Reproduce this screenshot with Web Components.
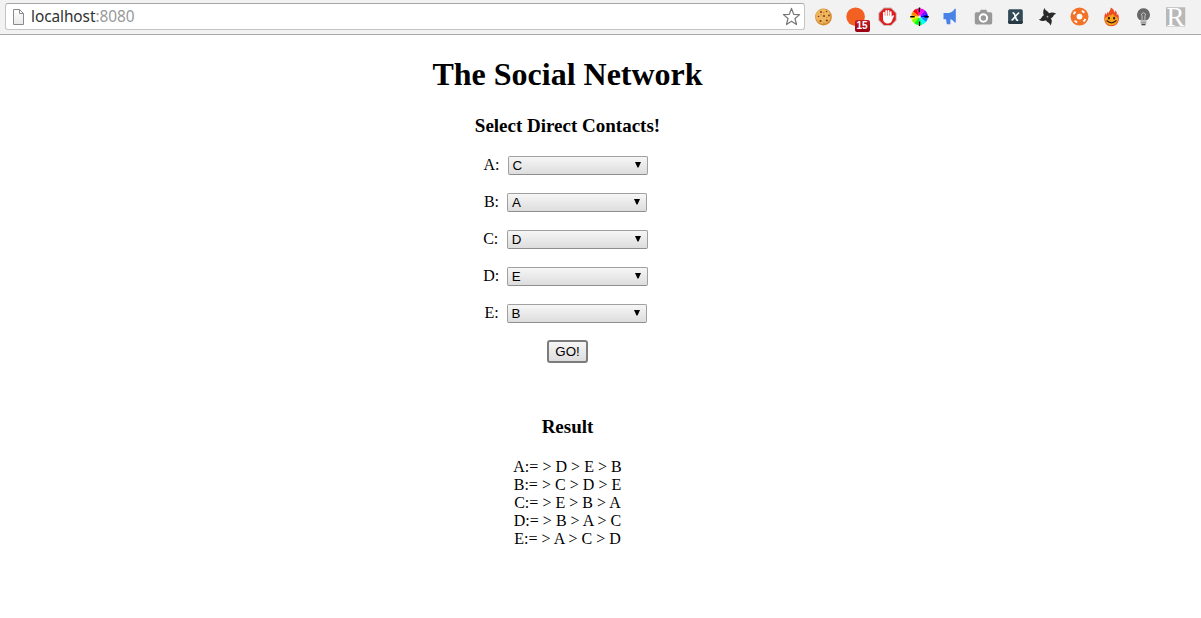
<!DOCTYPE html>
<html lang="en"><head><meta charset="utf-8"><title>The Social Network</title>
<style>html,body{margin:0;height:100%;background:#fff;overflow:hidden}body{font:16px/18px "Liberation Serif",serif;color:#000}</style></head>
<body>
<browser-bar></browser-bar>
<social-page>
<contact-row label="A:" value="C"></contact-row><contact-row label="B:" value="A"></contact-row><contact-row label="C:" value="D" wide style="--gap:8.6px"></contact-row><contact-row label="D:" value="E" wide></contact-row><contact-row label="E:" value="B"></contact-row>
<go-button slot="action">GO!</go-button>
<result-line slot="results">A:= &gt; D &gt; E &gt; B</result-line><result-line slot="results">B:= &gt; C &gt; D &gt; E</result-line><result-line slot="results">C:= &gt; E &gt; B &gt; A</result-line><result-line slot="results">D:= &gt; B &gt; A &gt; C</result-line><result-line slot="results">E:= &gt; A &gt; C &gt; D</result-line>
</social-page>
<script>
const define = (name, html) => customElements.define(name, class extends HTMLElement {
  constructor() { super(); this.attachShadow({mode: 'open'}).innerHTML = typeof html === 'function' ? html(this) : html; }
});

const wheel = ['#f00','#f08','#f0f','#80f','#00f','#08f','#0ff','#0f8','#0f0','#8f0','#ff0','#f80'].map((c, i) => {
  const p = a => `${9.5 + 8.4 * Math.sin(a)} ${9.7 - 8.4 * Math.cos(a)}`;
  const a = (i - 1.7) * Math.PI / 6;
  return `<path fill="${c}" d="M9.5 9.7L${p(a)}A8.4 8.4 0 0 1 ${p(a + Math.PI / 6)}Z"/>`;
}).join('');
const blade = 'M8 9.6C6 7.2 6 4 8.9.8c.2 2 .8 2.6 2 3.7 1.2 1.2 1.6 2.8 1.2 5z';

const icons = {
  cookie: '<circle cx="9.5" cy="10" r="8.4" fill="#d58b32"/><circle cx="9.1" cy="9.3" r="7.4" fill="#efb65d"/><g fill="#7b421a"><circle cx="7" cy="5" r="1"/><circle cx="12.5" cy="4.5" r=".8"/><circle cx="10" cy="9" r="1.1"/><circle cx="15" cy="8.5" r="1"/><circle cx="4.5" cy="9.5" r=".8"/><circle cx="6.5" cy="14" r="1.1"/><circle cx="12.8" cy="13.5" r="1.1"/></g><g fill="#c77b2b"><circle cx="9.8" cy="5.6" r=".7"/><circle cx="7" cy="8" r=".6"/><circle cx="10" cy="16" r=".7"/><circle cx="13" cy="10.5" r=".6"/></g>',
  orange: '<circle cx="9.6" cy="9.7" r="9.3" fill="#f26122"/>',
  hand: '<g transform="translate(-.5 -.3)"><path fill="#c5b0b0" d="M6.2.9h7.6l5.3 5.3v7.6l-5.3 5.3H6.2L.9 13.8V6.2z"/><path fill="#e01b1b" d="M6.6 1.8h6.8l4.8 4.8v6.8l-4.8 4.8H6.6l-4.8-4.8V6.6z"/><path d="M6.4 11V6M8.7 10V4.3M11 10V4.1M13.2 10V5.5" stroke="#fff" stroke-width="1.8" stroke-linecap="round"/><path fill="#fff" d="M5.5 9h8.6v1.5l1-1.6c.7-.7 1.7-.2 1.3.7l-2.2 5c-.8 1.6-2 2.2-3.6 2.2-3 0-5.1-1.8-5.1-4.8z"/></g>',
  wheel: wheel + '<path d="M9.5 .4v4.5M9.5 14.5v4.5M.2 9.7h4.5M14.3 9.7h4.5" stroke="#000" stroke-width="1.4"/><circle cx="9.5" cy="9.7" r="1.3" fill="#fff" opacity=".8"/>',
  horn: '<path transform="translate(-1.5 -.3)" fill="#4a83e8" d="M3 6.3h5.2q3.8-.6 6-4.3h1.1v13.8h-1.1q-2-3-4.3-3.5v5.3H6.3l-.8-5H3z"/>',
  camera: '<g transform="translate(-.6)"><path fill="#999" d="M3 5.2h3l1.3-2.4h5.6l1.3 2.4h3q1.6 0 1.6 1.6v9q0 1.6-1.6 1.6H3q-1.6 0-1.6-1.6v-9q0-1.6 1.6-1.6z"/><circle cx="10" cy="11" r="3.7" fill="none" stroke="#fff" stroke-width="2"/></g>',
  x: '<g transform="translate(-.6)"><rect x="2.7" y="2.3" width="14.7" height="14.8" rx="1.8" fill="#324b57"/><path d="M2.8 14h14.5v1.3q0 1.8-1.8 1.8h-11q-1.7 0-1.7-1.8z" fill="#263943"/><path d="M7.1 5.7c2 0 2.3 1.6 2.9 4s1 3.8 2.8 3.8M13.8 5.7c-2.2.5-5.2 6.5-7.6 7.7" stroke="#fff" stroke-width="1.6" fill="none"/></g>',
  ninja: `<g transform="translate(-.5 -.3)"><g fill="#292929" transform="rotate(-12 10 10)">${[0, 90, 180, 270].map(a => `<path d="${blade}" transform="rotate(${a} 10 10)"/>`).join('')}<circle cx="10" cy="10" r="3"/></g><circle cx="10" cy="10" r=".9" fill="#aaa"/></g>`,
  ring: '<g transform="translate(-.5 -.4)"><circle cx="10" cy="10" r="9" fill="#f27327"/><circle cx="10" cy="10" r="2.9" fill="#fff"/><g fill="none" stroke="#fff" stroke-width="1.9"><path d="M4.2 7.7A6.2 6.2 0 0 1 6 5.2M12.3 4.2A6.2 6.2 0 0 1 14.9 6.1M15.8 12.3A6.2 6.2 0 0 1 13.9 14.9M7.7 15.8A6.2 6.2 0 0 1 5.1 13.9"/></g></g>',
  flame: '<g transform="translate(-.5)"><path fill="#ed4b22" d="M6.8 7C6.6 4.5 9.7 3.5 9 .4c2.6 1 4 2.9 3.7 5 .9-.5 1.1-1.4.9-2.2 1.7 1.5 2 3.2 1.6 4.7.7-.1 1.1-.6 1.3-1.1 2.7 7.4-1 12.4-6.5 12.4S1 14.4 3.7 5.9c.8.7 1.1 1.3 1.3 2.1l.7-3c.9.7 1.1 1.3 1.1 2z"/><path d="M3.5 11C5 10 6.8 9.5 7.6 7.7 8.5 9 10 8.8 10.8 6.5c1.5 2.4 3.7 2.8 5.7 4.6.3 4.3-2.5 7.2-6.5 7.2S3.3 15.3 3.5 11z" fill="#f8a51b"/><ellipse cx="7.4" cy="11.2" rx="1" ry="1.4" fill="#351b0a"/><ellipse cx="12.6" cy="11.2" rx="1" ry="1.4" fill="#351b0a"/><path d="M5 13.5q5 4.6 10 0" fill="none" stroke="#421d08" stroke-width="1.2"/></g>',
  bulb: '<g transform="translate(-.5)"><path fill="#686868" d="M10 1.2a6.5 6.5 0 0 0-3.8 11.7h7.6A6.5 6.5 0 0 0 10 1.2z"/><path d="M8.6 13V9L7.8 7.2 10 5.7l2.2 1.5-.8 1.8v4" fill="none" stroke="#ccc" stroke-width=".9"/><path d="M7 14h6M7.2 15.8h5.6" stroke="#858585" stroke-width="1.2"/><path d="M8 17.6h4" stroke="#444" stroke-width="1.4"/></g>',
  r: '<path d="M0 .3H19.2v19.2H0z" fill="#b8b8b8"/>'
};

define('browser-icon', el => `<style>:host{width:32px;height:32px;display:grid;place-items:center;position:relative}svg{width:20px;height:20px;display:block;grid-area:1/1}b{position:absolute;left:15px;top:19px;width:15px;height:12px;background:linear-gradient(#c51d2b,#970013);border-radius:2px;color:#fff;font:bold 10px/12px "Liberation Sans",sans-serif;text-align:center}i{grid-area:1/1;color:#fff;font:normal 27px/30px "Liberation Serif",serif;z-index:1}</style><svg viewBox="0 0 20 20">${icons[el.getAttribute('name')]}</svg>${el.getAttribute('name') === 'orange' ? '<b>15</b>' : ''}${el.getAttribute('name') === 'r' ? '<i>R</i>' : ''}`);

define('browser-bar', `<style>
:host{display:flex;box-sizing:border-box;height:35px;background:#f2f2f2;border-bottom:1px solid #a9a9a9;padding:3px 0 0 5px}
.address{box-sizing:border-box;width:800px;height:27px;background:#fff;border:1px solid #c4c4c4;border-top-color:#a6a6a6;border-radius:3px;display:flex;align-items:center;padding:0 3px 0 6px}
.url{font:15.4px/20px "Noto Sans",sans-serif;letter-spacing:-.07px;color:#303030;flex:1;margin-left:6px}.url span{color:#999}
.tools{display:flex;height:27px;margin-left:2.5px;align-items:center}svg{display:block}</style>
<div class="address"><svg width="13" height="16" viewBox="0 0 13 16"><defs><linearGradient id="p" x2="0" y2="1"><stop stop-color="#fff"/><stop offset="1" stop-color="#e9e9e9"/></linearGradient></defs><path d="M1.5 .5h6l4 4v11h-10zM7.5.5v4h4" fill="url(#p)" stroke="#8b8b8b"/></svg><div class="url">localhost<span>:8080</span></div><svg width="20" height="20" viewBox="0 0 20 20"><path d="M10.5 1.4l2.2 5.9 5.9.3-4.6 3.9 1.5 6-5-3.3-5 3.3 1.5-6-4.6-3.9 5.9-.3z" fill="#fff" stroke="#777" stroke-width="1.2" stroke-linejoin="round"/></svg></div>
<div class="tools">${Object.keys(icons).map(n => `<browser-icon name="${n}"></browser-icon>`).join('')}</div>`);

define('contact-row', el => `<style>:host{display:flex;height:37px;align-items:center;justify-content:center}.label{margin-right:8px;position:relative;top:-.5px}.select{box-sizing:border-box;width:140px;height:19px;border:1px solid #a0a0a0;border-bottom-color:#8e8e8e;border-radius:2px;background:linear-gradient(#f6f6f6,#ddd);font:13.33px/17px "Liberation Sans",sans-serif;display:flex;justify-content:space-between;align-items:center;padding:0 6px 0 4px;margin-right:4px}:host([wide]) .select{width:141px}:host([wide]) .label{margin-right:var(--gap,7.6px)}svg{display:block;margin-top:-2px}</style><span class="label">${el.getAttribute('label')}</span><div class="select" role="combobox"><span>${el.getAttribute('value')}</span><svg width="6" height="6"><path d="M0 0h6L3.5 5.5H2.5z"/></svg></div>`);

define('go-button', `<style>:host{box-sizing:border-box;display:block;width:41px;height:23px;margin:0 auto;border:2px solid #7c7c7c;border-radius:3px;background:linear-gradient(#f6f6f6,#ddd);font:13.33px/19px "Liberation Sans",sans-serif;text-align:center}</style><slot></slot>`);
define('result-line', `<style>:host{display:block;line-height:18px;letter-spacing:.025px}</style><slot></slot>`);

define('social-page', `<style>:host{display:block;width:1135px;text-align:center;padding-top:21px}h1{font-size:32px;line-height:37px;margin:0 0 22px}h3{font-size:19px;line-height:22px;margin:0}.contacts{margin-top:10px;margin-bottom:8px}.result{margin:53px 0 20px}</style><h1>The Social Network</h1><h3>Select Direct Contacts!</h3><div class="contacts"><slot></slot></div><slot name="action"></slot><h3 class="result">Result</h3><div><slot name="results"></slot></div>`);
</script></body></html>
